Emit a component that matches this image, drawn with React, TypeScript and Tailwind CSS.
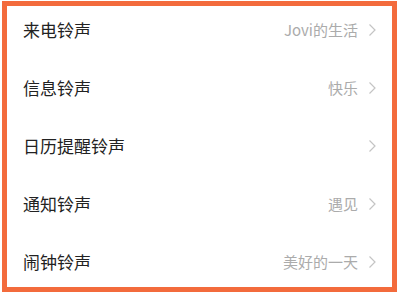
const rows = [
  { label: "来电铃声", value: "Jovi的生活" },
  { label: "信息铃声", value: "快乐" },
  { label: "日历提醒铃声", value: "" },
  { label: "通知铃声", value: "遇见" },
  { label: "闹钟铃声", value: "美好的一天" },
];

function Chevron() {
  return (
    <svg width="9" height="14" viewBox="0 0 9 14" fill="none" className="shrink-0">
      <path d="M1.5 1.5 L7 7 L1.5 12.5" stroke="#c4c4c4" strokeWidth="1.2" />
    </svg>
  );
}

export default function App() {
  return (
    <div
      className="w-[400px] h-[300px] bg-white pl-[2px] pt-[1px]"
      style={{ fontFamily: '"Noto Sans CJK SC", "Liberation Sans", sans-serif' }}
    >
      <div className="w-[395px] h-[291px] border-[5px] border-[#f36b3c] overflow-hidden">
        {rows.map((r) => (
          <div key={r.label} className="h-[58px] flex items-start pt-[12px] pl-[16px] pr-[15px]">
            <div className="flex-1 text-[17px] leading-[24px] text-[#222222]">{r.label}</div>
            <div className="flex items-center gap-[10px] h-[24px]">
              {r.value && <span className="text-[15px] text-[#ababab]">{r.value}</span>}
              <Chevron />
            </div>
          </div>
        ))}
      </div>
    </div>
  );
}
